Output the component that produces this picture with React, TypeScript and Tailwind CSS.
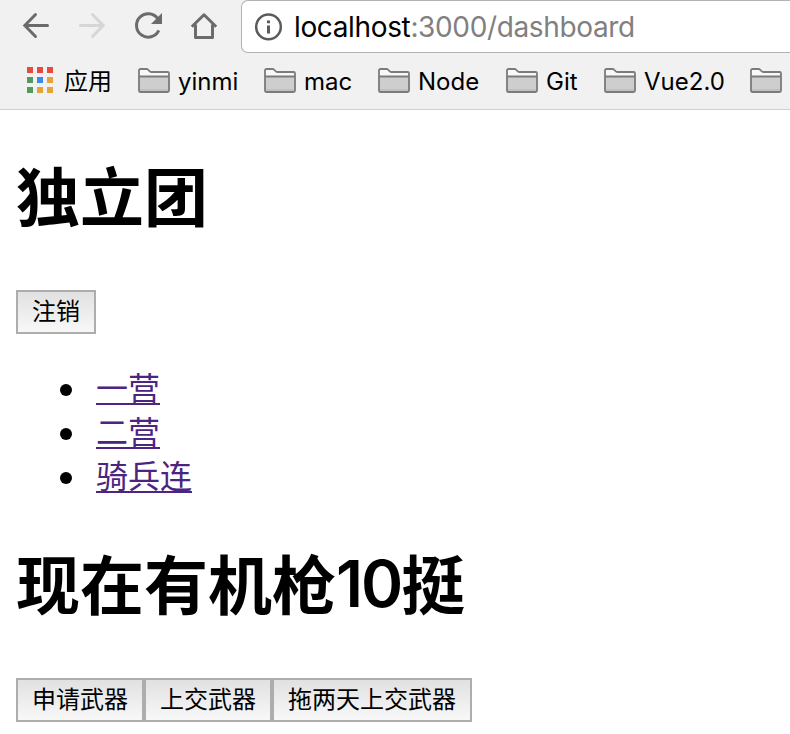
import React from "react";

const latin = "font-['Inter','Noto_Sans_CJK_SC',sans-serif]";
const cjk = "font-['Noto_Sans_CJK_SC',sans-serif]";

function Folder() {
  return (
    <svg width="32" height="26" viewBox="0 0 32 26" fill="none" className="block shrink-0">
      <path d="M1 9V2.5Q1 1 2.5 1H9.3L12.5 4H29.5Q31 4 31 5.5V9Z" fill="#f8f8f8" />
      <path d="M1 8.5H31V24H1Z" fill="#cecece" />
      <path d="M2 22H30" stroke="#bcbcbc" strokeWidth="1.5" />
      <path d="M1 8.5H31M2.5 1H8.7Q9.4 1 10 1.7L11.8 3.3Q12.6 4 13.5 4H29.5Q31 4 31 5.5V22.5Q31 24 29.5 24H2.5Q1 24 1 22.5V2.5Q1 1 2.5 1Z" stroke="#7b7b7b" strokeWidth="1.8" />
    </svg>
  );
}

function Bookmark({ label, className }: { label: string; className: string }) {
  return (
    <div className={`flex shrink-0 items-center gap-2 ${className}`}>
      <Folder />
      <span className="whitespace-nowrap pt-0.5">{label}</span>
    </div>
  );
}

const appColors = ["#e64b3f", "#e64b3f", "#e64b3f", "#559a5c", "#3f88ee", "#e6a339", "#559a5c", "#e6a339", "#e6a339"];

function Toolbar() {
  return (
    <header className={`h-[110px] overflow-hidden border-b border-[#cfcfcf] bg-[#f1f1f1] ${latin}`}>
      <div className="flex h-[53px]">
        <svg width="241" height="53" viewBox="0 0 241 53" fill="none" stroke="#6b6b6b" strokeWidth="3" className="block shrink-0">
          <path d="M47.5 25.5H25M35.5 14.5L24.8 25.5L35.5 36.5" strokeLinecap="round" />
          <path d="M80.5 25.5H103M92.5 14.5L103.2 25.5L92.5 36.5" stroke="#d6d6d6" strokeLinecap="round" />
          <path d="M157.6 18.4A11.7 11.7 0 1 0 158.8 30.4" />
          <path d="M162 13V24H151Z" fill="#6b6b6b" stroke="none" />
          <path d="M191.8 26.8L204 14.8L216.2 26.8M195.5 24.5V37.5H212.5V24.5" strokeLinejoin="round" />
        </svg>
        <div className="flex h-[53px] flex-1 items-center rounded-l-[7px] border border-r-0 border-[#b3b3b3] bg-white pl-[13px]">
          <svg width="28" height="28" viewBox="0 0 28 28" fill="none" className="block shrink-0">
            <circle cx="13.5" cy="13.9" r="12.3" stroke="#5b5b5b" strokeWidth="2.5" />
            <path d="M12 7.5H15V10.3H12ZM12 12.5H15V20.5H12Z" fill="#5b5b5b" />
          </svg>
          <div className="ml-[11px] whitespace-nowrap text-[28px] leading-[50px] tracking-[-0.36px] text-[#808080]">
            <span className="text-black">localhost</span>:3000/dashboard
          </div>
        </div>
      </div>
      <div className="flex h-[56px] items-center pl-[27px] text-[24px] leading-[32px] text-black">
        <div className="flex w-[111px] shrink-0 items-center gap-[11px]">
          <div className="grid grid-cols-[6px_6px_6px] gap-1 pb-0.5">
            {appColors.map((color, i) => (
              <i key={i} className="h-1.5 w-1.5" style={{ backgroundColor: color }} />
            ))}
          </div>
          <span className={`whitespace-nowrap pb-0.5 ${cjk}`}>应用</span>
        </div>
        <Bookmark label="yinmi" className="w-[126px]" />
        <Bookmark label="mac" className="w-[114px]" />
        <Bookmark label="Node" className="w-[128px]" />
        <Bookmark label="Git" className="w-[98px]" />
        <Bookmark label="Vue2.0" className="w-[146px]" />
        <Folder />
      </div>
    </header>
  );
}

function Button({ children, className }: { children: string; className: string }) {
  return (
    <button className={`flex h-11 items-center justify-center whitespace-nowrap border-2 border-[#adadad] bg-linear-to-b from-[#e1e1e1] to-[#f8f8f8] pb-[5px] text-[24px] leading-[34px] ${className}`}>
      {children}
    </button>
  );
}

export default function App() {
  return (
    <div className="h-[734px] w-[790px] overflow-hidden bg-white text-black">
      <Toolbar />
      <main className={`px-4 ${cjk}`}>
        <h1 className="flex h-[180px] items-center whitespace-nowrap pb-[15px] text-[64px] font-bold leading-[90px]">独立团</h1>
        <Button className="w-20">注销</Button>
        <ul className="mt-8 text-[32px] leading-[40px] text-[#4c2482]">
          {["一营", "二营", "骑兵连"].map((name) => (
            <li key={name} className="flex h-11 pl-11">
              <i className="mr-6 mt-[18px] h-3 w-3 rounded-full bg-black" />
              <a className="underline decoration-2 underline-offset-[3px]">{name}</a>
            </li>
          ))}
        </ul>
        <h1 className="flex h-[180px] items-center whitespace-nowrap pb-[15px] text-[64px] font-bold leading-[90px]">
          现在有机枪<span className="pt-[7px] font-['Inter',sans-serif] font-semibold tracking-[-2px]">10</span>挺
        </h1>
        <div className="flex">
          <Button className="w-32">申请武器</Button>
          <Button className="w-32">上交武器</Button>
          <Button className="w-[200px]">拖两天上交武器</Button>
        </div>
      </main>
    </div>
  );
}
